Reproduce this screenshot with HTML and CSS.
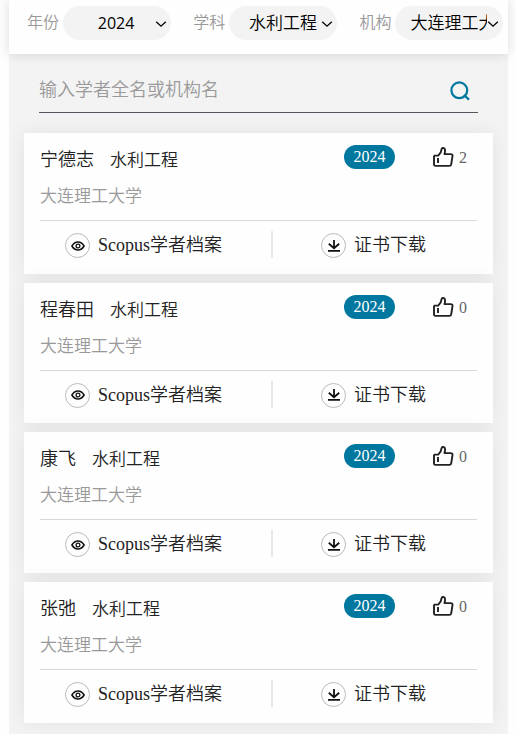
FILE: index.html
```html
<!DOCTYPE html>
<html lang="zh-CN">
<head>
  <meta charset="UTF-8">
  <title>学者</title>
  <link rel="stylesheet" href="styles.css">
</head>
<body>
<!-- 图标 -->
<svg class="icons">
  <symbol id="arrow" viewBox="0 0 12 8">
    <path d="M1.2 1.8L6 6.200l4.800-4.400" fill="none" stroke="currentColor" stroke-width="1.3"/>
  </symbol>
  <symbol id="like" viewBox="0 0 22 22">
    <path d="M2 9.600h4.300c2-1.600 3-3.600 3.300-6.400.2-1.800 3.200-1.600 3.400.4.2 1.700-.1 3.200-.5 4.500h6.200c1.300 0 2 .8 1.800 2l-1.300 8.200c-.2 1.100-.8 1.600-1.800 1.600H3.500c-1 0-1.500-.5-1.500-1.400V9.600M6 12v5" fill="none" stroke="currentColor" stroke-width="1.900" stroke-linejoin="round"/>
  </symbol>
  <symbol id="eye" viewBox="0 0 14 10">
    <path d="M.9 5C2.500 2.300 4.500 1 7 1s4.500 1.300 6.100 4C11.500 7.700 9.500 9 7 9S2.500 7.700.9 5z" fill="none" stroke="currentColor" stroke-width="1.500"/>
    <circle cx="7" cy="5" r="1.900" fill="none" stroke="currentColor" stroke-width="1.300"/>
  </symbol>
  <symbol id="down" viewBox="0 0 14 14">
    <path d="M7 1v8M1.800 4.800L7 9.200l5.200-4.400M1 11.800h12" fill="none" stroke="currentColor" stroke-width="1.800"/>
  </symbol>
</svg>

<div class="page">
  <div class="filter">
    <div class="filter-item">
      <span class="label">年份</span>
      <div class="select year"><span>2024</span><svg class="arrow"><use href="#arrow"/></svg></div>
    </div>
    <div class="filter-item">
      <span class="label">学科</span>
      <div class="select subject"><span>水利工程</span><svg class="arrow"><use href="#arrow"/></svg></div>
    </div>
    <div class="filter-item">
      <span class="label">机构</span>
      <div class="select org"><span>大连理工大学</span><svg class="arrow"><use href="#arrow"/></svg></div>
    </div>
  </div>

  <div class="search">
    <span>输入学者全名或机构名</span>
    <svg class="search-icon" viewBox="0 0 20 20">
      <circle cx="9.300" cy="9.300" r="7.900" fill="none" stroke="currentColor" stroke-width="2.200"/>
      <path d="M14 14l5 4.600" stroke="currentColor" stroke-width="2.300"/>
    </svg>
  </div>

  <div class="list">
    <div class="card">
      <div class="top">
        <span class="name">宁德志</span>
        <span class="major">水利工程</span>
        <span class="badge">2024</span>
        <div class="like"><svg><use href="#like"/></svg>2</div>
      </div>
      <div class="school">大连理工大学</div>
      <div class="links">
        <div class="link"><i class="round"><svg class="eye"><use href="#eye"/></svg></i>Scopus学者档案</div>
        <div class="link"><i class="round"><svg class="down"><use href="#down"/></svg></i>证书下载</div>
      </div>
    </div>
    <div class="card">
      <div class="top">
        <span class="name">程春田</span>
        <span class="major">水利工程</span>
        <span class="badge">2024</span>
        <div class="like"><svg><use href="#like"/></svg>0</div>
      </div>
      <div class="school">大连理工大学</div>
      <div class="links">
        <div class="link"><i class="round"><svg class="eye"><use href="#eye"/></svg></i>Scopus学者档案</div>
        <div class="link"><i class="round"><svg class="down"><use href="#down"/></svg></i>证书下载</div>
      </div>
    </div>
    <div class="card">
      <div class="top">
        <span class="name">康飞</span>
        <span class="major">水利工程</span>
        <span class="badge">2024</span>
        <div class="like"><svg><use href="#like"/></svg>0</div>
      </div>
      <div class="school">大连理工大学</div>
      <div class="links">
        <div class="link"><i class="round"><svg class="eye"><use href="#eye"/></svg></i>Scopus学者档案</div>
        <div class="link"><i class="round"><svg class="down"><use href="#down"/></svg></i>证书下载</div>
      </div>
    </div>
    <div class="card">
      <div class="top">
        <span class="name">张弛</span>
        <span class="major">水利工程</span>
        <span class="badge">2024</span>
        <div class="like"><svg><use href="#like"/></svg>0</div>
      </div>
      <div class="school">大连理工大学</div>
      <div class="links">
        <div class="link"><i class="round"><svg class="eye"><use href="#eye"/></svg></i>Scopus学者档案</div>
        <div class="link"><i class="round"><svg class="down"><use href="#down"/></svg></i>证书下载</div>
      </div>
    </div>
  </div>
</div>
</body>
</html>
```
FILE: styles.css
```css
* {
  margin: 0;
  padding: 0;
  box-sizing: border-box;
}
body {
  background: #fefefe;
  color: #222;
  font-family: "Liberation Serif", "Noto Sans CJK SC", serif;
  font-weight: 350;
  overflow: hidden;
}
.icons {
  display: none;
}
.page {
  width: 499px;
  height: 734px;
  margin-left: 9px;
  background: #f3f3f3;
}

/* 顶部筛选 */
.filter {
  height: 54px;
  padding: 6px 0 0 18px;
  display: flex;
  gap: 22.5px;
  background: #fefefe;
  box-shadow: 0 0 12px rgba(0,0,0,0.14);
}
.filter-item {
  display: flex;
  height: 34px;
  align-items: center;
  gap: 3.8px;
}
.label {
  width: 32px;
  font-size: 16px;
  line-height: 34px;
  color: #999;
}
.select {
  width: 108px;
  height: 34px;
  padding-right: 4px;
  border-radius: 17px;
  background: #f3f3f3;
  display: flex;
  align-items: center;
  font-family: "Open Sans", "Noto Sans CJK SC", sans-serif;
  font-size: 17px;
  line-height: 32px;
  color: #000;
}
.select span {
  flex: 1;
  overflow: hidden;
  white-space: nowrap;
}
.year {
  padding-left: 35px;
  font-size: 16px;
  font-weight: 400;
}
.subject {
  padding-left: 20px;
}
.org {
  padding-left: 15px;
}
.arrow {
  width: 12px;
  height: 8px;
  margin-top: 2px;
}

/* 搜索 */
.search {
  margin: 15px 30px 0;
  height: 44px;
  padding-right: 8px;
  border-bottom: 1px solid #55555f;
  display: flex;
  justify-content: space-between;
  font-size: 18px;
  line-height: 42px;
  color: #999;
}
.search-icon {
  width: 20px;
  height: 20px;
  margin-top: 12px;
  color: #00779f;
}

/* 列表 */
.list {
  padding: 20px 15px 0;
  display: flex;
  flex-direction: column;
  gap: 9px;
}
.card {
  height: 140.7px;
  padding: 12px 16px 0;
  background: #fefefe;
  box-shadow: 0 0 20px rgba(0,0,0,0.07);
}
.top {
  display: flex;
  height: 31px;
}
.name {
  font-size: 18px;
  line-height: 31px;
}
.major {
  margin-left: 16px;
  font-size: 17px;
  line-height: 31px;
}
.badge {
  width: 51px;
  height: 24px;
  margin-left: auto;
  border-radius: 12px;
  background: #00779f;
  color: #fff;
  font-size: 16px;
  line-height: 24px;
  text-align: center;
}
.like {
  width: 45px;
  height: 24px;
  margin-left: 37px;
  display: flex;
  gap: 5px;
  font-size: 16px;
  line-height: 26px;
  color: #666;
}
.like svg {
  width: 22px;
  height: 22px;
  margin-top: 1px;
  color: #222;
}
.school {
  height: 44px;
  font-size: 17px;
  line-height: 42px;
  color: #999;
}
.links {
  display: flex;
  height: 51px;
  border-top: 1px solid #d8d8d8;
  padding-top: 10px;
}
.link {
  width: 233px;
  height: 27px;
  padding-left: 25px;
  display: flex;
  font-size: 18px;
  line-height: 28px;
  white-space: nowrap;
}
.link:first-child {
  border-right: 2px solid #e8e8e8;
}
.link + .link {
  width: 204px;
  padding-left: 48px;
}
.round {
  width: 25px;
  height: 25px;
  margin: 2px 8px 0 0;
  border: 1px solid #bbb;
  border-radius: 50%;
  display: flex;
  align-items: center;
  justify-content: center;
  color: #111;
}
.eye {
  width: 14px;
  height: 10px;
}
.down {
  width: 14px;
  height: 14px;
}
```
